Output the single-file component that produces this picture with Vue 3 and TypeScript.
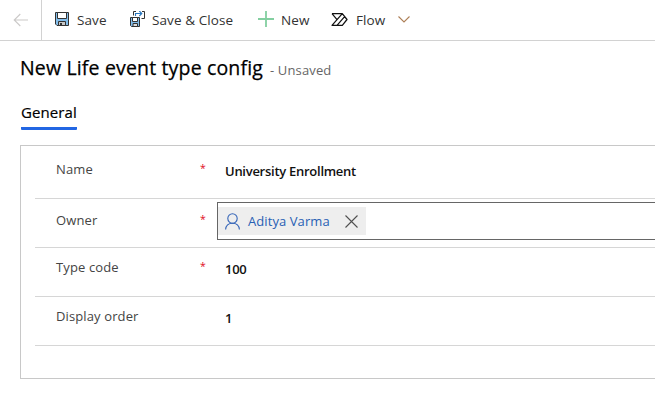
<script setup lang="ts">
interface Field {
  id: string
  label: string
  required: boolean
  value: string
  lookup?: boolean
}

const fields: Field[] = [
  { id: 'name', label: 'Name', required: true, value: 'University Enrollment' },
  { id: 'owner', label: 'Owner', required: true, value: 'Aditya Varma', lookup: true },
  { id: 'code', label: 'Type code', required: true, value: '100' },
  { id: 'order', label: 'Display order', required: false, value: '1' },
]
</script>

<template>
  <main class="page">
    <header class="toolbar">
      <div class="back">
        <svg width="16" height="14" viewBox="0 0 16 14"><path d="M15 7H1.2M7.3 1L1.2 7l6.1 6" fill="none" stroke="#cbc9c8" stroke-width="1.1" /></svg>
      </div>
      <button class="command save">
        <svg class="disk" width="14" height="14" viewBox="0 0 14 14">
          <path d="M.5.5h13v13H2L.5 12z" fill="#83beec" stroke="#333" />
          <path d="M2.5.5h9v6h-9z" fill="#fff" stroke="#333" />
          <path d="M3.5 9.5h7v4h-7z" fill="#c8c8c8" stroke="#333" />
          <path d="M5 11h2v2H5z" fill="#333" />
        </svg>
        <span>Save</span>
      </button>
      <button class="command save-close">
        <svg class="disk-close" width="16" height="16" viewBox="0 0 16 16">
          <path d="M.5 6.500h9v9h-8l-1-1z" fill="#83beec" stroke="#333" />
          <path d="M2.500 6.500h5v4h-5z" fill="#fff" stroke="#333" />
          <path d="M3 12.500h4.500v3H3z" fill="#ddd" stroke="#333" />
          <path d="M3.500 4.500V.500H6M12 .500h2.500v7H11.500" fill="none" stroke="#333" />
          <path d="M5.500 5V2.500h6M9.300 0l2.500 2.500L9.300 5" fill="none" stroke="#2675bd" stroke-width="1.100" />
        </svg>
        <span>Save &amp; Close</span>
      </button>
      <button class="command new">
        <svg class="plus" width="16" height="16" viewBox="0 0 16 16"><path d="M8 0v16M0 8h16" fill="none" stroke="#83cfa0" stroke-width="1.8" /></svg>
        <span>New</span>
      </button>
      <button class="command flow">
        <svg class="flow-icon" width="17" height="13" viewBox="0 0 17 13">
          <path d="M1 .7h10.300l4.700 5.800-4.700 5.800H1L11.300.7M1 .7l4.800 5.600M6 12.300l7.600-8.700" fill="none" stroke="#111" stroke-width="1.250" stroke-linejoin="round" />
        </svg>
        <span>Flow</span>
        <svg class="chevron" width="12" height="7" viewBox="0 0 12 7"><path d="M.5.5L6 6 11.500.5" fill="none" stroke="#ad7f57" stroke-width="1.100" /></svg>
      </button>
    </header>

    <section class="heading">
      <h1>New Life event type config</h1>
      <span class="status">- Unsaved</span>
    </section>

    <nav class="tabs"><a class="tab">General</a></nav>

    <section class="panel">
      <div v-for="field in fields" :key="field.id" class="row" :class="field.id">
        <label>{{ field.label }}</label>
        <span class="required">{{ field.required ? '*' : '' }}</span>
        <div v-if="field.lookup" class="lookup">
          <div class="chip">
            <svg width="15" height="17" viewBox="0 0 15 17">
              <circle cx="7.500" cy="5.500" r="4.700" fill="none" stroke="#3565b8" stroke-width="1.100" />
              <path d="M.6 16.500c.3-3.800 3-6.300 6.900-6.300s6.600 2.500 6.900 6.300" fill="none" stroke="#3565b8" stroke-width="1.100" />
            </svg>
            <span class="person">{{ field.value }}</span>
            <svg class="clear" width="13" height="13" viewBox="0 0 13 13"><path d="M.5.5l12 12M12.500.5l-12 12" fill="none" stroke="#505050" stroke-width="1.100" /></svg>
          </div>
        </div>
        <span v-else class="value">{{ field.value }}</span>
      </div>
    </section>
  </main>
</template>

<style>
body {
  background: #fff;
  overflow: hidden;
}
</style>

<style scoped>
.page {
  width: 655px;
  height: 407px;
  overflow: hidden;
  font-family: "Open Sans", "Noto Sans", sans-serif;
  font-size: 13px;
  color: #333;
}
.toolbar {
  display: flex;
  height: 40px;
  border-bottom: 1px solid #d2d2d2;
}
.back {
  display: flex;
  box-sizing: border-box;
  width: 42px;
  padding: 13px 0 0 13px;
  border-right: 1px solid #d2d2d2;
}
.command {
  display: flex;
  align-items: center;
  height: 40px;
  padding: 0;
  border: 0;
  background: none;
  font: inherit;
  font-size: 13.500px;
  letter-spacing: 0.080px;
  color: #333;
  white-space: nowrap;
}
.command svg {
  flex: none;
}
.save {
  width: 88px;
  padding-left: 13px;
  gap: 8px;
}
.save-close {
  width: 128px;
  gap: 6px;
}
.new {
  width: 73px;
  gap: 7px;
}
.flow {
  gap: 8px;
}
.disk,
.disk-close,
.plus,
.flow-icon {
  margin-top: -2px;
}
.chevron {
  margin: -1px 0 0 5px;
}
.heading {
  display: flex;
  align-items: baseline;
  height: 58px;
  padding: 13px 0 0 20px;
  box-sizing: border-box;
}
h1 {
  margin: 0;
  width: 250px;
  font-size: 19.500px;
  line-height: 28px;
  font-weight: 500;
  letter-spacing: 0.160px;
  color: #000;
  -webkit-text-stroke: 0.250px #000;
  white-space: nowrap;
}
.status {
  letter-spacing: 0.140px;
  color: #666;
}
.tabs {
  display: flex;
  height: 46px;
  padding-left: 21px;
}
.tab {
  box-sizing: border-box;
  width: 56px;
  height: 31px;
  padding-top: 3px;
  border-bottom: 3px solid #2266e3;
  border-radius: 1px;
  font-size: 15px;
  line-height: 20px;
  font-weight: 500;
  letter-spacing: 0.100px;
  color: #000;
  -webkit-text-stroke: 0.200px #000;
}
.panel {
  box-sizing: border-box;
  height: 234px;
  margin-left: 20px;
  padding-left: 14px;
  border: 1px solid #c8c8c8;
  border-right: 0;
}
.row {
  display: grid;
  grid-template-columns: 144px 17px 1fr;
  box-sizing: border-box;
  height: 49px;
  padding-left: 21px;
  border-bottom: 1px solid #d6d6d6;
  line-height: 20px;
}
.name {
  height: 53px;
}
label {
  padding-top: 9px;
  letter-spacing: 0.120px;
  color: #444;
}
.name label {
  padding-top: 13px;
}
.owner label {
  padding-top: 11px;
}
.required {
  padding-top: 8px;
  font-size: 10.500px;
  color: #e00b1c;
}
.name .required {
  padding-top: 12px;
}
.owner .required {
  padding-top: 10px;
}
.value {
  padding: 11px 0 0 8px;
  font-weight: 600;
  letter-spacing: -0.270px;
  color: #111;
}
.name .value {
  padding-top: 15px;
}
.lookup {
  box-sizing: border-box;
  height: 38px;
  margin-top: 3px;
  padding-top: 4px;
  border: 1px solid #666;
  border-right: 0;
}
.chip {
  display: flex;
  align-items: center;
  box-sizing: border-box;
  width: 148px;
  height: 28px;
  padding-left: 7px;
  background: #eee;
}
.person {
  width: 105px;
  padding-left: 8px;
  box-sizing: border-box;
  letter-spacing: 0.080px;
  color: #2860b4;
  white-space: nowrap;
}
</style>
